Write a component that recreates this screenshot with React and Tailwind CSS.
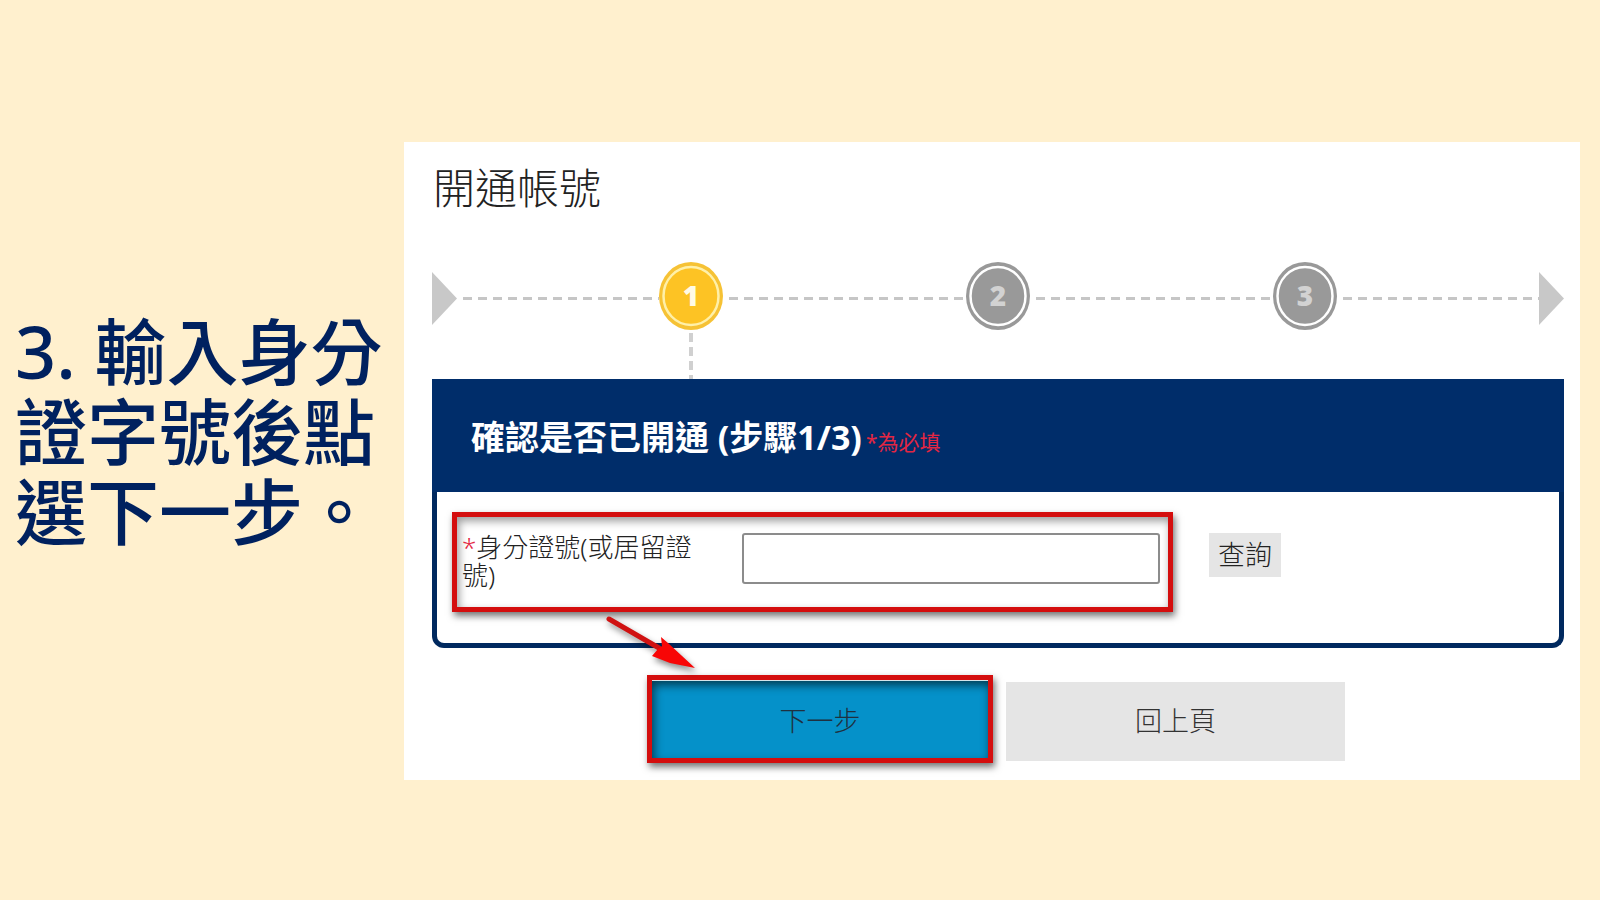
const steps = [
  { id: 1, active: true },
  { id: 2, active: false },
  { id: 3, active: false },
]

const Dashes = ({ className }) => (
  <span
    className={`h-[3px] bg-[repeating-linear-gradient(90deg,transparent_0_6px,#c6c6c6_6px_15px)] ${className}`}
  />
)

const Arrow = () => (
  <svg width="25" height="53" viewBox="0 0 25 53" className="shrink-0" aria-hidden="true">
    <path d="M0 0L25 26.5L0 53Z" fill="#c8c8c8" />
  </svg>
)

const StepBadge = ({ id, active }) => (
  <span className="relative shrink-0">
    <svg width="64" height="74" viewBox="0 0 64 74" className="block">
      <ellipse cx="32" cy="35" rx="32" ry="34" fill={active ? "#f6c235" : "#999999"} />
      <ellipse
        cx="32"
        cy="35"
        rx="27.5"
        ry="29"
        fill={active ? "#fdc324" : "#999999"}
        stroke={active ? "#fff0a8" : "#ffffff"}
        strokeWidth="2.5"
      />
      <text
        x="32"
        y="45"
        textAnchor="middle"
        fill={active ? "#fffbe6" : "#d2d2d2"}
        className="font-['Open_Sans',sans-serif] text-[28px] font-extrabold"
      >
        {id}
      </text>
    </svg>
    {active && (
      <span className="absolute left-[30px] top-[72px] h-[46px] w-[4px] bg-[repeating-linear-gradient(180deg,#d0d0d0_0_9px,transparent_9px_14px)]" />
    )}
  </span>
)

const App = () => {
  return (
    <main className="flex min-h-screen items-start bg-[#fff0ce] pr-5 pt-[142px] font-['Noto_Sans','Noto_Sans_CJK_TC',sans-serif]">
      <h1 className="mt-[169px] w-[404px] shrink-0 whitespace-nowrap pl-[15px] text-[72px] font-medium leading-[80px] text-[#00215f]">
        3. 輸入身分
        <br />
        證字號後點
        <br />
        選下一步。
      </h1>

      <section className="min-w-0 flex-1 bg-white pb-[17px] pl-7 pr-4 pt-[22px]">
        <h2 className="pl-px text-[42px] font-light leading-[48px] text-[#222222]">開通帳號</h2>

        <div className="mt-[49px] flex items-center">
          <Arrow />
          <Dashes className="flex-5" />
          <StepBadge {...steps[0]} />
          <Dashes className="flex-6" />
          <StepBadge {...steps[1]} />
          <Dashes className="flex-6" />
          <StepBadge {...steps[2]} />
          <Dashes className="flex-5" />
          <Arrow />
        </div>

        <form onSubmit={(e) => e.preventDefault()}>
          <div className="mt-11 rounded-b-xl border-[5px] border-t-0 border-[#00295f]">
            <div className="-mx-[5px] flex h-[113px] items-baseline bg-[#002d6a] pl-[39px] pt-[34px] leading-[48px]">
              <h3 className="text-[34px] font-bold text-white">確認是否已開通 (步驟1/3)</h3>
              <span className="pl-1 text-[21px] text-[#e32642]">*為必填</span>
            </div>

            <div className="flex items-start pb-[31px] pl-[15px] pt-5">
              <div className="flex h-[100px] min-w-0 flex-1 items-start border-[5px] border-[#d40e0e] pl-[5px] pr-2 pt-4 shadow-[2px_4px_7px_rgba(0,0,0,0.55),inset_2px_4px_8px_rgba(0,0,0,0.4)]">
                <label
                  htmlFor="idNumber"
                  className="mr-10 w-60 shrink-0 text-[26px] font-light leading-[28px] text-[#222222]"
                >
                  <span className="text-[#e32642]">*</span>身分證號(或居留證號)
                </label>
                <input
                  id="idNumber"
                  type="text"
                  className="h-[51px] min-w-0 flex-1 rounded-[3px] border-2 border-[#8c8c8c] bg-white px-2 text-[26px]"
                />
              </div>
              <div className="w-[386px] shrink-0 pl-9 pt-[21px]">
                <button type="button" className="bg-[#e5e5e5] px-[9px] text-[27px] font-light leading-[44px] text-[#222222]">
                  查詢
                </button>
              </div>
            </div>
          </div>

          <div className="mt-[27px] flex items-center justify-center gap-[13px] pr-1">
            <div className="relative">
              <button
                type="submit"
                className="block h-[88px] w-[346px] border-[5px] border-[#d40e0e] bg-[#0591c9] pt-1 text-[27px] font-light text-[#1f3040] shadow-[2px_4px_7px_rgba(0,0,0,0.55),inset_0_1px_0_#d5e4ea,inset_2px_5px_10px_rgba(0,0,0,0.6)]"
              >
                下一步
              </button>
              {/* arrow from the field to the button */}
              <svg
                width="96"
                height="62"
                viewBox="0 0 96 62"
                className="absolute -left-[42px] -top-[60px] overflow-visible drop-shadow-[2px_4px_3px_rgba(0,0,0,0.45)]"
                aria-hidden="true"
              >
                <path d="M4 4L54 33" stroke="#d01212" strokeWidth="5" strokeLinecap="round" />
                <path d="M56 22L63 28L90 53L65 48L47 41L53 34L57 31Z" fill="#f80606" />
              </svg>
            </div>
            <button type="button" className="mt-1 h-[79px] w-[339px] bg-[#e5e5e5] text-[27px] font-light text-[#333333]">
              回上頁
            </button>
          </div>
        </form>
      </section>
    </main>
  )
}

export default App
